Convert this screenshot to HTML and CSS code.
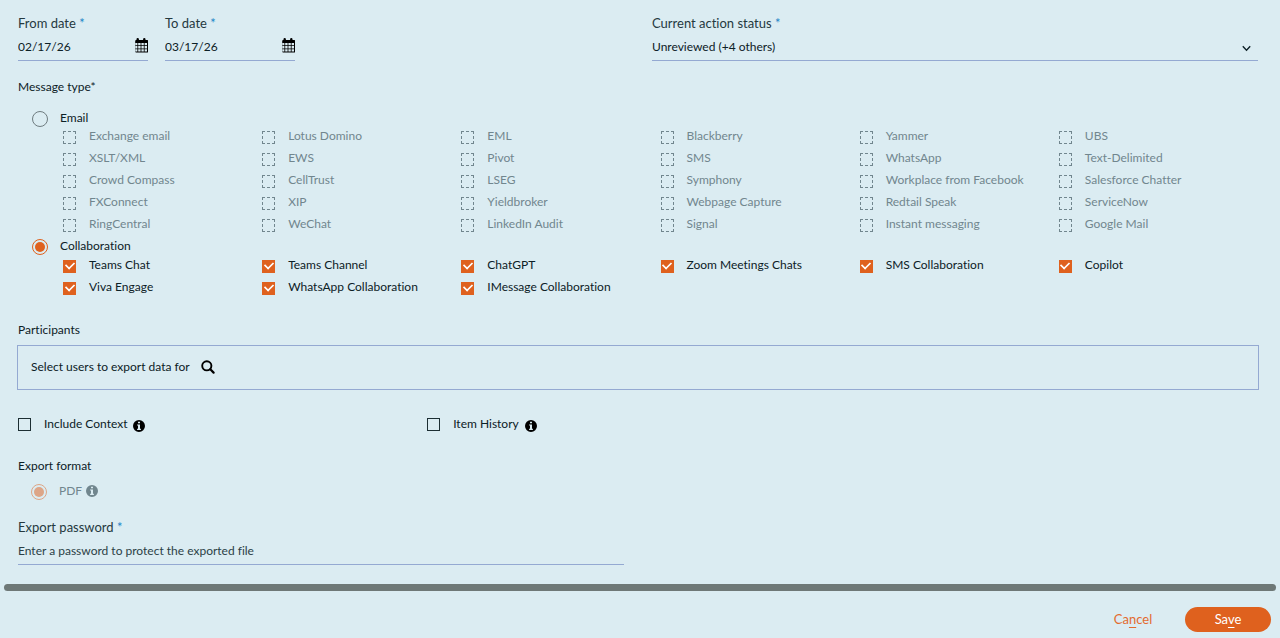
FILE: index.html
```
<!DOCTYPE html>
<html lang="en">
<head>
<meta charset="utf-8">
<title>Export</title>
<link rel="stylesheet" href="styles.css">
</head>
<body>
<svg class="sprite" aria-hidden="true">
  <symbol id="calendar" viewBox="0 0 14 15">
    <path fill="currentColor" fill-rule="evenodd" d="M1 2h1.500v-.8q0-1.200 1.200-1.200t1.200 1.200v.8h4.200v-.8q0-1.200 1.200-1.200t1.200 1.200v.8h1.700q1 0 1 1v10.500q0 1-1 1h-11q-1 0-1-1v-10.500q0-1 1-1zM1 5v2.200h2.400v-2.200zM4.200 5v2.200h2.400v-2.200zM7.400 5v2.200h2.400v-2.200zM10.600 5v2.200h2.400v-2.200zM1 8v2.400h2.400v-2.400zM4.200 8v2.400h2.400v-2.400zM7.400 8v2.400h2.400v-2.400zM10.600 8v2.400h2.400v-2.400zM1 11.200v2.300h2.400v-2.300zM4.200 11.200v2.300h2.400v-2.300zM7.400 11.200v2.300h2.400v-2.300zM10.600 11.200v2.300h2.400v-2.300z"/>
  </symbol>
  <symbol id="info" viewBox="0 0 12 12">
    <path fill="currentColor" fill-rule="evenodd" d="M6 0a6 6 0 1 1 0 12a6 6 0 1 1 0-12zM5 1.700v1.600h2v-1.600zM4.100 4.500v1.100h.9v3.200h-.9v1.100h3.800v-1.100h-.9v-4.300z"/>
  </symbol>
</svg>
<form class="export">
  <main class="fields">
    <div class="halves">
      <div class="dates">
        <div class="field">
          <label class="caption" for="from">From date <span class="star">*</span></label>
          <div class="line">
            <input class="text" id="from" type="text" value="02/17/26">
            <button class="icon-button" type="button" aria-label="Choose from date"><svg class="calendar"><use href="#calendar"/></svg></button>
          </div>
        </div>
        <div class="field">
          <label class="caption" for="to">To date <span class="star">*</span></label>
          <div class="line">
            <input class="text" id="to" type="text" value="03/17/26">
            <button class="icon-button" type="button" aria-label="Choose to date"><svg class="calendar"><use href="#calendar"/></svg></button>
          </div>
        </div>
      </div>
      <div class="field">
        <label class="caption" for="status">Current action status <span class="star">*</span></label>
        <div class="line line-select">
          <select class="text" id="status"><option>Unreviewed (+4 others)</option></select>
          <svg class="chevron" viewBox="0 0 8 6" aria-hidden="true"><path d="M.7 1L4 4.500L7.300 1" fill="none" stroke="currentColor" stroke-width="1.200"/></svg>
        </div>
      </div>
    </div>

    <fieldset class="types">
      <legend class="heading">Message type*</legend>
      <label class="kind"><input class="radio" type="radio" name="kind">Email</label>
      <div class="options">
        <label class="option off"><input class="box" type="checkbox" disabled>Exchange email</label>
        <label class="option off"><input class="box" type="checkbox" disabled>Lotus Domino</label>
        <label class="option off"><input class="box" type="checkbox" disabled>EML</label>
        <label class="option off"><input class="box" type="checkbox" disabled>Blackberry</label>
        <label class="option off"><input class="box" type="checkbox" disabled>Yammer</label>
        <label class="option off"><input class="box" type="checkbox" disabled>UBS</label>
        <label class="option off"><input class="box" type="checkbox" disabled>XSLT/XML</label>
        <label class="option off"><input class="box" type="checkbox" disabled>EWS</label>
        <label class="option off"><input class="box" type="checkbox" disabled>Pivot</label>
        <label class="option off"><input class="box" type="checkbox" disabled>SMS</label>
        <label class="option off"><input class="box" type="checkbox" disabled>WhatsApp</label>
        <label class="option off"><input class="box" type="checkbox" disabled>Text-Delimited</label>
        <label class="option off"><input class="box" type="checkbox" disabled>Crowd Compass</label>
        <label class="option off"><input class="box" type="checkbox" disabled>CellTrust</label>
        <label class="option off"><input class="box" type="checkbox" disabled>LSEG</label>
        <label class="option off"><input class="box" type="checkbox" disabled>Symphony</label>
        <label class="option off"><input class="box" type="checkbox" disabled>Workplace from Facebook</label>
        <label class="option off"><input class="box" type="checkbox" disabled>Salesforce Chatter</label>
        <label class="option off"><input class="box" type="checkbox" disabled>FXConnect</label>
        <label class="option off"><input class="box" type="checkbox" disabled>XIP</label>
        <label class="option off"><input class="box" type="checkbox" disabled>Yieldbroker</label>
        <label class="option off"><input class="box" type="checkbox" disabled>Webpage Capture</label>
        <label class="option off"><input class="box" type="checkbox" disabled>Redtail Speak</label>
        <label class="option off"><input class="box" type="checkbox" disabled>ServiceNow</label>
        <label class="option off"><input class="box" type="checkbox" disabled>RingCentral</label>
        <label class="option off"><input class="box" type="checkbox" disabled>WeChat</label>
        <label class="option off"><input class="box" type="checkbox" disabled>LinkedIn Audit</label>
        <label class="option off"><input class="box" type="checkbox" disabled>Signal</label>
        <label class="option off"><input class="box" type="checkbox" disabled>Instant messaging</label>
        <label class="option off"><input class="box" type="checkbox" disabled>Google Mail</label>
      </div>
      <label class="kind"><input class="radio" type="radio" name="kind" checked>Collaboration</label>
      <div class="options">
        <label class="option"><input class="box" type="checkbox" checked>Teams Chat</label>
        <label class="option"><input class="box" type="checkbox" checked>Teams Channel</label>
        <label class="option"><input class="box" type="checkbox" checked>ChatGPT</label>
        <label class="option"><input class="box" type="checkbox" checked>Zoom Meetings Chats</label>
        <label class="option"><input class="box" type="checkbox" checked>SMS Collaboration</label>
        <label class="option"><input class="box" type="checkbox" checked>Copilot</label>
        <label class="option"><input class="box" type="checkbox" checked>Viva Engage</label>
        <label class="option"><input class="box" type="checkbox" checked>WhatsApp Collaboration</label>
        <label class="option"><input class="box" type="checkbox" checked>IMessage Collaboration</label>
      </div>
    </fieldset>

    <h2 class="heading">Participants</h2>
    <div class="participants">
      <span>Select users to export data for</span>
      <button class="icon-button" type="button" aria-label="Search users">
        <svg class="search" viewBox="0 0 14 14"><circle cx="5.800" cy="5.800" r="4.600" fill="none" stroke="currentColor" stroke-width="1.900"/><path d="M9.300 9.300L12.600 12.600" stroke="currentColor" stroke-width="2.200" stroke-linecap="round"/></svg>
      </button>
    </div>

    <div class="extras">
      <div class="extra">
        <label class="option"><input class="box" type="checkbox">Include Context</label>
        <svg class="info info-low"><use href="#info"/></svg>
      </div>
      <div class="extra">
        <label class="option"><input class="box" type="checkbox">Item History</label>
        <svg class="info info-low"><use href="#info"/></svg>
      </div>
    </div>

    <fieldset class="formats">
      <legend class="heading">Export format</legend>
      <div class="format off">
        <label class="kind"><input class="radio" type="radio" name="format" checked disabled>PDF</label>
        <svg class="info"><use href="#info"/></svg>
      </div>
    </fieldset>

    <div class="halves">
      <div class="field">
        <label class="caption" for="password">Export password <span class="star">*</span></label>
        <div class="line">
          <input class="text" id="password" type="password" placeholder="Enter a password to protect the exported file">
        </div>
      </div>
    </div>
  </main>
  <div class="scrollbar"></div>
  <footer class="actions">
    <button class="button" type="button">Ca<u>n</u>cel</button>
    <button class="button primary" type="submit">Sa<u>v</u>e</button>
  </footer>
</form>
</body>
</html>
```
FILE: styles.css
```
* { box-sizing: border-box; }

body {
  margin: 0;
  background: #dbecf2;
  color: #0c2026;
  font: 12px/16px Lato, sans-serif;
  font-variant-ligatures: none;
}

input, select, button { font: inherit; color: inherit; }
input { margin: 0; }
fieldset { margin: 0; padding: 0; border: 0; min-width: 0; }
legend { padding: 0; }

.sprite { position: absolute; width: 0; height: 0; }

.fields { padding: 15px 22px 19px 18px; }

.halves {
  display: grid;
  grid-template-columns: 1fr 1fr;
  gap: 28px;
}

.dates { display: flex; gap: 17px; }
.dates .field { width: 130px; }

.caption { display: block; margin-bottom: 4px; color: #25393f; font-size: 13px; }
.star { color: #1c86c8; }

.line {
  display: flex;
  align-items: center;
  height: 26px;
  padding-bottom: 1px;
  border-bottom: 1px solid #94a9d2;
}
.line-select { padding-right: 7px; }

.text {
  flex: 1;
  min-width: 0;
  padding: 0;
  border: 0;
  background: none;
  appearance: none;
}
.text::placeholder { color: #2b3f46; opacity: 1; }

.icon-button {
  display: flex;
  padding: 0;
  border: 0;
  background: none;
  color: #000;
}
.calendar { width: 14px; height: 15px; margin-bottom: 3px; }
.chevron { width: 9px; height: 7px; margin-top: 2px; }
.search { width: 14px; height: 14px; }
.info { width: 12px; height: 12px; }
.info-low { margin-top: 5px; color: #000; }

.heading { margin: 0; font-size: 12px; font-weight: 400; }

.types { margin-top: 18px; }
.types .kind:first-of-type { margin-top: 15px; }

.kind {
  display: flex;
  align-items: center;
  gap: 12px;
  height: 15px;
  margin-left: 14px;
}

.options {
  display: grid;
  grid-template-columns: repeat(6, 1fr);
  grid-auto-rows: 22px;
  padding-left: 45px;
}
.options + .kind { height: 19px; padding-top: 2px; }

.option { display: flex; align-items: center; gap: 13px; }
.off { color: #71868e; }

.box {
  flex: none;
  display: grid;
  place-items: center;
  width: 13px;
  height: 13px;
  margin-top: 2px;
  border: 1px solid #1c2e33;
  appearance: none;
}
.box:disabled { border: 1px dashed #71868e; }
.box:checked { border-color: #df611e; background: #df611e; }
.box:checked::before {
  content: "";
  width: 8px;
  height: 5px;
  margin-bottom: 3px;
  border: solid #fff;
  border-width: 0 0 2px 2px;
  transform: rotate(-45deg) scale(0.85);
}

.radio {
  flex: none;
  width: 16px;
  height: 16px;
  margin-top: 2px;
  border: 1px solid #6f7c80;
  border-radius: 50%;
  appearance: none;
}
.radio:checked {
  padding: 2px;
  border-color: #df611e;
  background: #df611e content-box;
}
.radio:disabled { opacity: 0.5; }

.types + .heading { margin-top: 24px; }

.participants {
  display: flex;
  align-items: center;
  gap: 11px;
  min-height: 45px;
  margin: 7px -1px 0;
  padding: 0 13px 2px;
  border: 1px solid #94a9d2;
}

.extras { display: flex; margin-top: 25px; }
.extra { display: flex; align-items: center; gap: 6px; flex: 0 0 33%; }

.formats { margin-top: 26px; }
.format { display: flex; align-items: center; gap: 4px; margin: 9px 0 21px; }
.formats .kind { margin-left: 13px; }

.scrollbar {
  height: 7px;
  margin: 0 4px;
  border-radius: 4px;
  background: #6e7877;
}

.actions {
  display: flex;
  justify-content: flex-end;
  padding: 16px 9px 5px;
}

.button {
  min-width: 86px;
  height: 25px;
  padding: 0 12px 2px;
  border: 0;
  border-radius: 13px;
  background: none;
  color: #e36b2f;
  font-size: 13px;
}
.button u { text-underline-offset: 3px; }
.button + .button { margin-left: 9px; }
.primary { background: #df611e; color: #fff; }
```
